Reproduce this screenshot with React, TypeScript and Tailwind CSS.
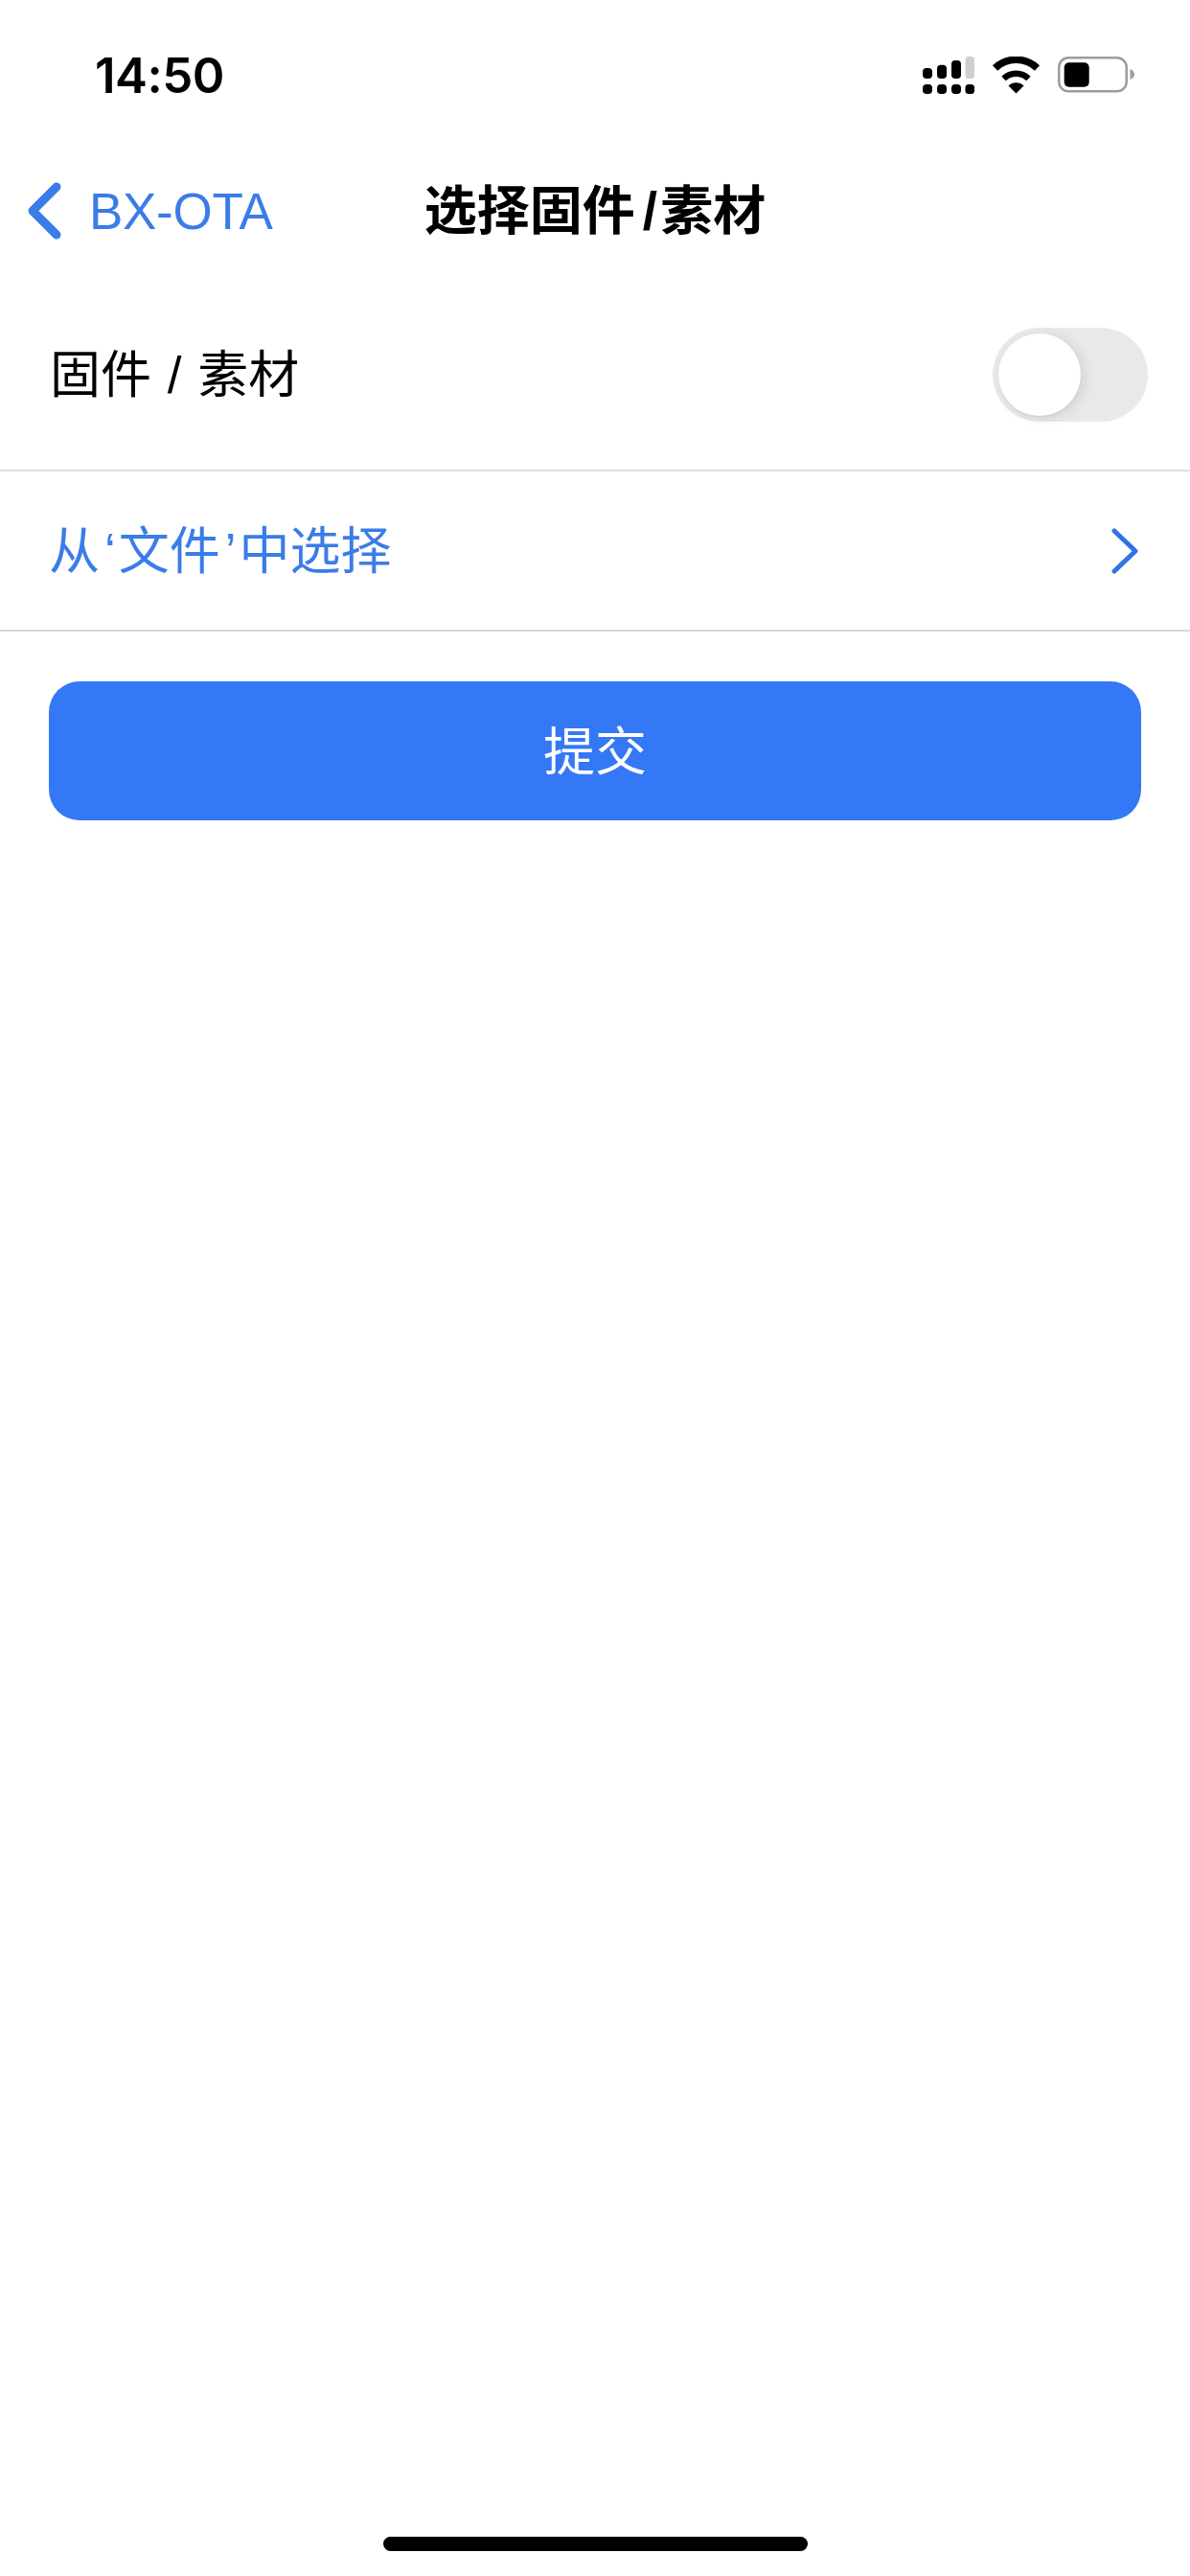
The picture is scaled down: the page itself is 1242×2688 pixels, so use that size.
import React from "react";

function StatusIcons() {
  return (
    <div className="flex items-center gap-[18px]">
      <svg width="54" height="39" viewBox="0 0 54 39">
        <g fill="#000">
          <rect x="0" y="12" width="10" height="11" rx="4" />
          <rect x="15" y="8.7" width="10" height="14.3" rx="4" />
          <rect x="30" y="4" width="10" height="19" rx="4" />
          <rect x="44.5" y="0" width="9.5" height="23" rx="3.5" fill="#cfcfcf" />
          <rect x="0" y="29" width="10" height="10" rx="4" />
          <rect x="15" y="29" width="10" height="10" rx="4" />
          <rect x="30" y="29" width="10" height="10" rx="4" />
          <rect x="44.5" y="29" width="9.5" height="10" rx="3.5" />
        </g>
      </svg>
      <svg width="51" height="39" viewBox="0 0 51 39">
        <path d="M3.5 12 A 32 32 0 0 1 47.5 12" fill="none" stroke="#000" strokeWidth="7.5" />
        <path d="M12.5 23 A 19 19 0 0 1 38.5 23" fill="none" stroke="#000" strokeWidth="6.5" />
        <path d="M25.5 38.5 L 17.5 30.5 A 11.5 11.5 0 0 1 33.5 30.5 Z" fill="#000" />
      </svg>
      <svg width="80" height="39" viewBox="0 0 80 39">
        <rect x="1.25" y="1.25" width="70.5" height="35" rx="10" fill="none" stroke="#9c9c9c" strokeWidth="2.5" />
        <rect x="6.7" y="6.3" width="26" height="25.4" rx="5" fill="#000" />
        <path d="M75.5 13 C 78.5 14 80 16.5 80 18.5 C 80 20.5 78.5 23 75.5 24 Z" fill="#9c9c9c" />
      </svg>
    </div>
  );
}

export default function App() {
  return (
    <div className="relative w-[1242px] h-[2688px] bg-white flex flex-col font-['Liberation_Sans','Noto_Sans_CJK_SC',sans-serif] text-black">
      <div className="h-[156px] shrink-0 flex items-center justify-between pl-[99px] pr-[58px]">
        <span className="text-[51px] leading-none font-semibold font-['Inter',sans-serif] tracking-[-0.5px]">14:50</span>
        <StatusIcons />
      </div>

      <div className="h-[128px] shrink-0 grid grid-cols-[1fr_auto_1fr] items-center">
        <div className="flex items-center gap-[27px] pl-[28px] text-[#3a7ce8]">
          <svg width="38" height="60" viewBox="0 0 38 60" className="shrink-0">
            <path d="M31 5 L6 30 L31 55" fill="none" stroke="#3a7ce8" strokeWidth="9" strokeLinecap="round" strokeLinejoin="round" />
          </svg>
          <span className="text-[53px] leading-none tracking-[-0.3px]">BX-OTA</span>
        </div>
        <span className="text-[55px] leading-none font-bold">选择固件<span className="ml-[8px] mr-[3px]">/</span>素材</span>
        <div />
      </div>

      <div className="mt-[7px] h-[201px] shrink-0 flex items-center justify-between pl-[52px] pr-[44px] border-b-2 border-[#dedede]">
        <span className="text-[53px] leading-none [word-spacing:2px] pt-[2px]">固件 / 素材</span>
        <div className="w-[162px] h-[98px] rounded-full bg-[#e9e9e9] flex items-center pl-[6px]">
          <div className="w-[86px] h-[86px] rounded-full bg-white shadow-[5px_2px_14px_rgba(0,0,0,0.09),0_2px_3px_rgba(0,0,0,0.05)]" />
        </div>
      </div>

      <div className="h-[167px] shrink-0 flex items-center justify-between pl-[51px] pr-[54px] border-b-2 border-[#d8d8d8] text-[#3a7ce8]">
        <span className="text-[53px] leading-none pt-[2px]">从<span className="ml-[5px] mr-[3px]">‘</span>文件<span className="ml-[5px] mr-[3px]">’</span>中选择</span>
        <svg width="28" height="48" viewBox="0 0 28 48" className="shrink-0">
          <path d="M3 3 L25 24 L3 45" fill="none" stroke="#2f74e6" strokeWidth="5" strokeLinecap="round" strokeLinejoin="round" />
        </svg>
      </div>

      <button className="mt-[52px] mx-[51px] h-[145px] shrink-0 rounded-[32px] bg-[#3478f6] text-white text-[54px] leading-none flex items-center justify-center pt-[2px]">
        提交
      </button>

      <div className="absolute left-[400px] top-[2647px] w-[443px] h-[15px] rounded-full bg-black" />
    </div>
  );
}
